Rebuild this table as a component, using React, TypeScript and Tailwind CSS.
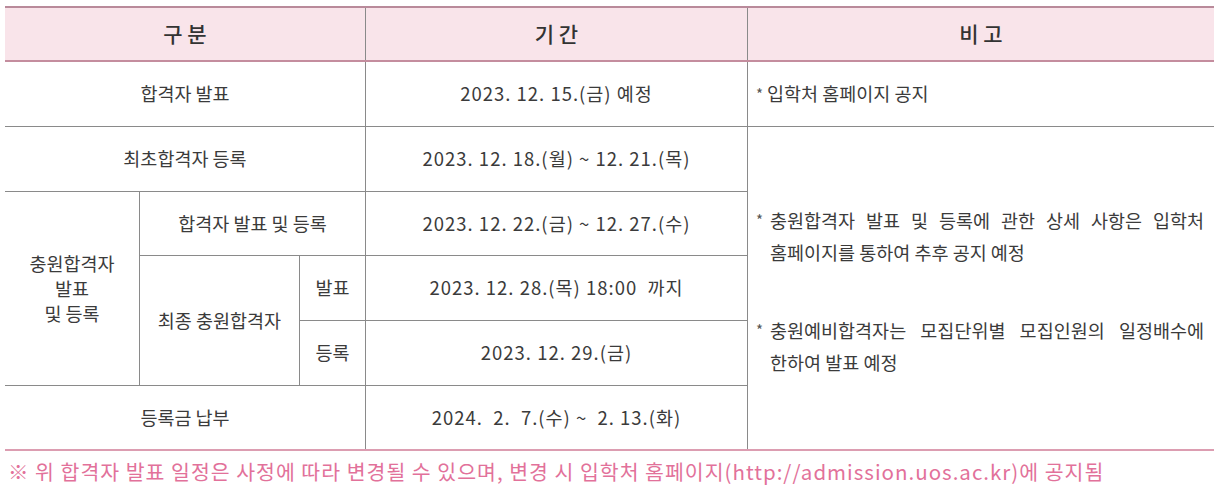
const FONT = "font-['Noto_Sans_CJK_KR','Noto_Sans',sans-serif]";

const cell = "flex items-center justify-center border-[#8a8a8a] text-[18.5px] text-[#3b3b3b]";
const date = "tracking-[1px] whitespace-pre";

function Remark({ children }: { children: React.ReactNode }) {
  return (
    <div className="flex">
      <span className="w-[14px] shrink-0 text-[15px] leading-[32px] text-[#555]">*</span>
      <p className="w-[434px] text-justify leading-[32px] break-keep">{children}</p>
    </div>
  );
}

export default function App() {
  return (
    <div className={`${FONT} min-h-[494px] bg-white pl-[5px] pt-[6px]`}>
      <div className="w-[1209px] border-t-2 border-b-2 border-t-[#b98a9a] border-b-[#dc9db1]">
        {/* header */}
        <div className="grid h-[54px] grid-cols-[361px_382px_466px] border-b-2 border-[#c48d9e] bg-[#f9e4ea] text-[21px] font-medium text-[#333] whitespace-pre">
          <div className="flex items-center justify-center border-r border-[#8a8a8a]">구 분</div>
          <div className="flex items-center justify-center border-r border-[#8a8a8a]">기 간</div>
          <div className="flex items-center justify-center">비 고</div>
        </div>

        {/* body */}
        <div className="grid grid-cols-[135px_160px_66px_382px_466px] grid-rows-[65px_65px_64px_65px_65px_63px]">
          <div className={`${cell} col-span-3 border-r border-b`}>합격자 발표</div>
          <div className={`${cell} ${date} border-r border-b`}>2023. 12. 15.(금) 예정</div>
          <div className={`${cell} justify-start! border-b pl-[8px]`}>
            <span className="mr-[4px] text-[15px] text-[#555]">*</span>입학처 홈페이지 공지
          </div>

          <div className={`${cell} col-span-3 border-r border-b`}>최초합격자 등록</div>
          <div className={`${cell} ${date} border-r border-b`}>2023. 12. 18.(월) ~ 12. 21.(목)</div>
          <div className={`${cell} col-start-5 row-span-5 row-start-2 flex-col items-start! pl-[8px] pt-[6px]`}>
            <Remark>충원합격자 발표 및 등록에 관한 상세 사항은 입학처 홈페이지를 통하여 추후 공지 예정</Remark>
            <div className="h-[46px]" />
            <Remark>충원예비합격자는 모집단위별 모집인원의 일정배수에 한하여 발표 예정</Remark>
          </div>

          <div className={`${cell} row-span-3 flex-col border-r border-b leading-[25px]`}>
            <span>충원합격자</span>
            <span>발표</span>
            <span>및 등록</span>
          </div>
          <div className={`${cell} col-span-2 border-r border-b`}>합격자 발표 및 등록</div>
          <div className={`${cell} ${date} border-r border-b`}>2023. 12. 22.(금) ~ 12. 27.(수)</div>

          <div className={`${cell} row-span-2 border-r border-b`}>최종 충원합격자</div>
          <div className={`${cell} border-r border-b`}>발표</div>
          <div className={`${cell} ${date} border-r border-b`}>2023. 12. 28.(목) 18:00  까지</div>

          <div className={`${cell} col-start-3 border-r border-b`}>등록</div>
          <div className={`${cell} ${date} border-r border-b`}>2023. 12. 29.(금)</div>

          <div className={`${cell} col-span-3 border-r`}>등록금 납부</div>
          <div className={`${cell} ${date} border-r`}>2024.  2.  7.(수) ~  2. 13.(화)</div>
        </div>
      </div>

      <p className="mt-[6px] pl-[3px] text-[20.5px] leading-[28px] tracking-[1px] whitespace-nowrap text-[#e2719a]">
        ※ 위 합격자 발표 일정은 사정에 따라 변경될 수 있으며, 변경 시 입학처 홈페이지(http://admission.uos.ac.kr)에 공지됨
      </p>
    </div>
  );
}
